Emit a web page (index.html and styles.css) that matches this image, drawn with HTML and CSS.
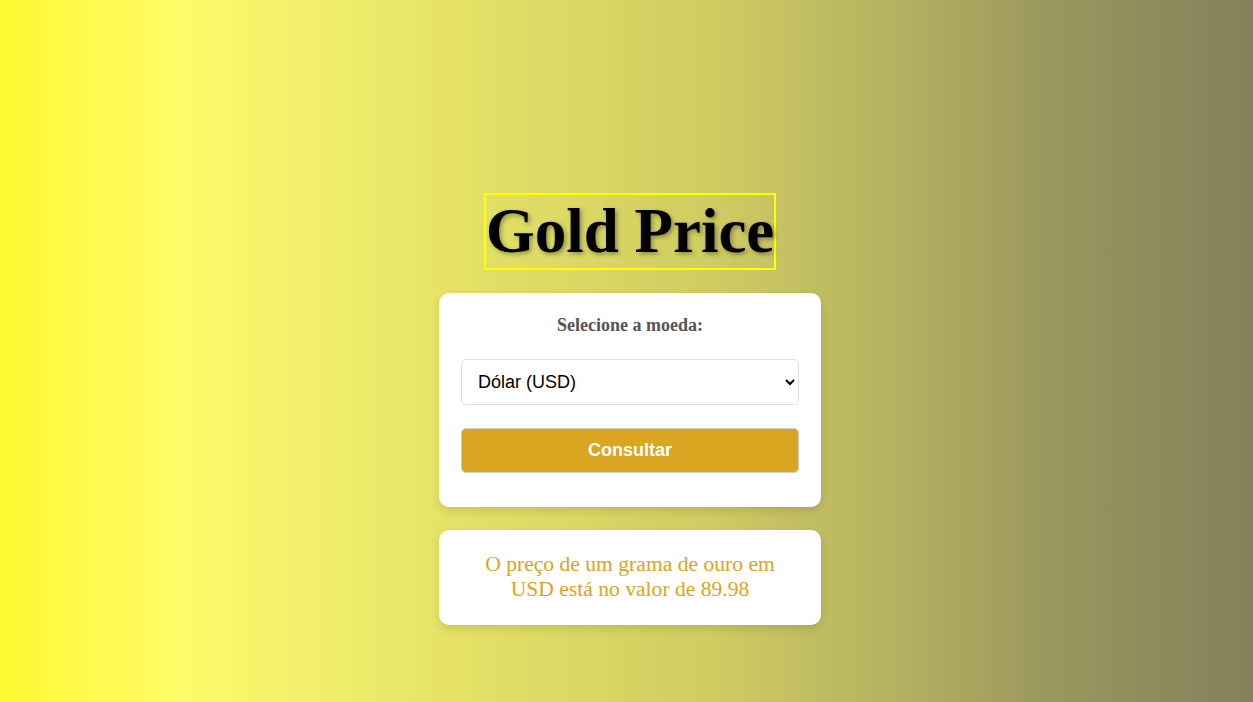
FILE: index.html
```html
<!DOCTYPE html>
<html lang="pt-BR">
<head>
<meta charset="utf-8">
<title>Gold Price</title>
<link rel="stylesheet" href="styles.css">
</head>
<body>
<main class="page">
  <h1 class="title">Gold Price</h1>
  <section class="card form-card">
    <label class="label" for="moeda">Selecione a moeda:</label>
    <select id="moeda" class="select">
      <option>Dólar (USD)</option>
      <option>Euro (EUR)</option>
      <option>Real (BRL)</option>
    </select>
    <button class="button">Consultar</button>
  </section>
  <section class="card result-card">
    <p class="result">O preço de um grama de ouro em USD está no valor de 89.98</p>
  </section>
</main>
</body>
</html>
```
FILE: styles.css
```css
html, body {
  margin: 0;
  height: 100%;
}
body {
  background: linear-gradient(to right, #fff830 0%, #fffb68 14%, #f2f06c 24%, #e3e066 38%, #cfcc62 57%, #b4b061 72%, #9a975d 84%, #857f5b 100%);
  font-family: "Liberation Serif", "Times New Roman", serif;
}
.page {
  display: flex;
  flex-direction: column;
  align-items: center;
  padding: 193px 0 0 7px;
  box-sizing: border-box;
  min-height: 100%;
}
.title {
  margin: 0 0 23px;
  border: 2px solid #ffff00;
  font-size: 63px;
  font-weight: bold;
  line-height: 73px;
  padding: 0;
  color: #000;
  text-shadow: 2px 2px 4px rgba(0,0,0,0.35);
}
.card {
  background: #fff;
  border-radius: 10px;
  width: 382px;
  box-sizing: border-box;
  box-shadow: 0 4px 10px rgba(0,0,0,0.12);
}
.form-card {
  padding: 22px 22px 34px;
  display: flex;
  flex-direction: column;
}
.label {
  text-align: center;
  font-weight: bold;
  font-size: 18px;
  color: #555;
  line-height: 20px;
  margin-bottom: 24px;
}
.select {
  height: 46px;
  border: 1px solid #ddd;
  border-radius: 5px;
  background: #fff;
  font-family: "Liberation Sans", Arial, sans-serif;
  font-size: 18px;
  padding: 0 12px;
  color: #000;
  margin-bottom: 23px;
}
.button {
  height: 45px;
  border: 1px solid #ccc;
  border-radius: 5px;
  background: #daa520;
  color: #fff;
  font-family: "Liberation Sans", Arial, sans-serif;
  font-weight: bold;
  font-size: 18px;
}
.result-card {
  margin-top: 23px;
  padding: 22px 40px 23px;
}
.result {
  margin: 0;
  text-align: center;
  color: #daa520;
  font-size: 21.6px;
  line-height: 25px;
}
```
